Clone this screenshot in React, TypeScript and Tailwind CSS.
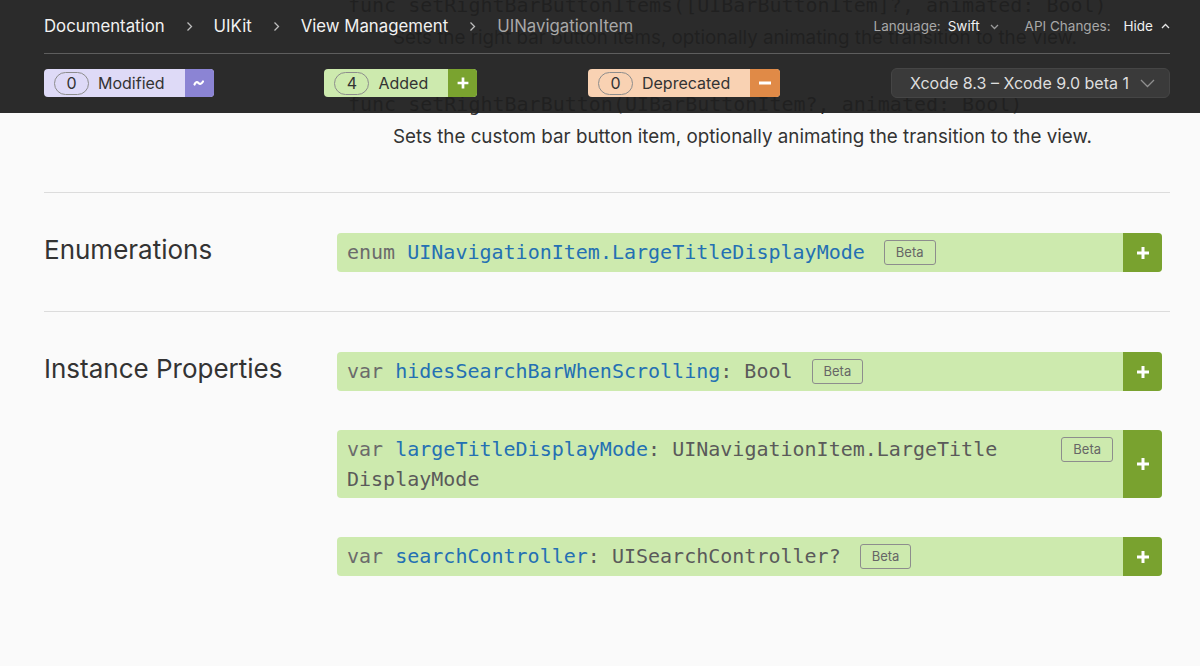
import React from 'react';

const mono = "font-['DejaVu_Sans_Mono',monospace]";

const Kw = ({ children }: { children: React.ReactNode }) => <span className="text-[#6b6b6b]">{children}</span>;
const Id = ({ children }: { children: React.ReactNode }) => <span className="text-[#2470b3]">{children}</span>;
const Ty = ({ children }: { children: React.ReactNode }) => <span className="text-[#5a5a5a]">{children}</span>;

const Plus = ({ className = '' }: { className?: string }) => (
    <svg width="14" height="14" viewBox="0 0 14 14" className={className}>
        <path d="M7 1v12M1 7h12" stroke="white" strokeWidth="3" />
    </svg>
);

const Minus = () => (
    <svg width="14" height="14" viewBox="0 0 14 14">
        <path d="M1 7h12" stroke="white" strokeWidth="3" />
    </svg>
);

const Tilde = () => (
    <svg width="12" height="8" viewBox="0 0 12 8">
        <path d="M1.5 5.5c1-2.5 2.5-3 4-1.5s3 1 4.5-1.5" fill="none" stroke="white" strokeWidth="2.2" strokeLinecap="round" />
    </svg>
);

const Crumb = () => (
    <svg width="7" height="11" viewBox="0 0 7 11">
        <path d="M1.5 1.5l4 4-4 4" fill="none" stroke="#bdbdbd" strokeWidth="1.3" />
    </svg>
);

const SmallChevron = ({ up = false }: { up?: boolean }) => (
    <svg width="9" height="6" viewBox="0 0 9 6">
        <path d={up ? 'M1 5l3.5-3.5L8 5' : 'M1 1l3.5 3.5L8 1'} fill="none" stroke={up ? '#e6e6e6' : '#9a9a9a'} strokeWidth="1.3" />
    </svg>
);

interface ChangeBadgeProps {
    count: number;
    label: string;
    bg: string;
    icon: React.ReactNode;
}

const ChangeBadge = ({ count, label, bg, icon }: ChangeBadgeProps) => (
    <div className={`flex h-[28px] rounded-[4px] overflow-hidden ${bg}`}>
        <div className="flex items-center pl-[10px] pr-[20px] gap-[9px]">
            <span className="flex h-[23px] w-[35px] items-center justify-center rounded-full border border-[#8c8c8c] text-[16px] text-[#333]">
                {count}
            </span>
            <span className="text-[16px] text-[#333]">{label}</span>
        </div>
        {icon}
    </div>
);

const BetaTag = () => (
    <span className="ml-[19px] mt-[3px] shrink-0 h-[25px] px-[11px] rounded-[3px] border border-[#8d8d8d] text-[13px] leading-[23px] text-[#666] font-['Inter',sans-serif]">
        Beta
    </span>
);

const ApiRow = ({ children }: { children: React.ReactNode }) => (
    <div className="flex min-h-[39px] rounded-[4px] overflow-hidden bg-[#cdeaae]">
        <div className="flex flex-1 min-w-0 items-start py-[4px] pl-[10px] pr-[10px]">
            <div className={`min-w-0 text-[20px] leading-[30px] ${mono}`}>{children}</div>
            <BetaTag />
        </div>
        <div className="flex w-[39px] shrink-0 items-center justify-center bg-[#79a22f]">
            <Plus />
        </div>
    </div>
);

const Header = () => (
    <div className="absolute inset-x-0 top-0 z-10 h-[113px] bg-[rgba(32,32,32,0.95)] pl-[44px] pr-[30px]">
        <div className="flex h-[54px] items-center justify-between border-b border-[#5e5e5e]">
            <div className="flex items-center gap-[21px] text-[16.8px] text-[#f2f2f2]">
                <span>Documentation</span>
                <Crumb />
                <span>UIKit</span>
                <Crumb />
                <span>View Management</span>
                <Crumb />
                <span className="text-[#a8a8a8]">UINavigationItem</span>
            </div>
            <div className="flex items-center text-[13.5px]">
                <span className="text-[#a8a8a8]">Language:</span>
                <span className="ml-[7px] text-[#f0f0f0]">Swift</span>
                <span className="ml-[10px]"><SmallChevron /></span>
                <span className="ml-[26px] text-[#a8a8a8]">API Changes:</span>
                <span className="ml-[13px] text-[#f0f0f0]">Hide</span>
                <span className="ml-[8px] mb-[2px]"><SmallChevron up /></span>
            </div>
        </div>
        <div className="flex items-center justify-between pt-[14px]">
            <ChangeBadge
                count={0}
                label="Modified"
                bg="bg-[#dedaf7]"
                icon={<span className="flex w-[29px] items-center justify-center bg-[#8b84d4]"><Tilde /></span>}
            />
            <ChangeBadge
                count={4}
                label="Added"
                bg="bg-[#cdeaae]"
                icon={<span className="flex w-[29px] items-center justify-center bg-[#7aa32f]"><Plus className="scale-90" /></span>}
            />
            <ChangeBadge
                count={0}
                label="Deprecated"
                bg="bg-[#f9d2b3]"
                icon={<span className="flex w-[30px] items-center justify-center bg-[#e08a47]"><Minus /></span>}
            />
            <div className="flex h-[30px] w-[279px] items-center justify-between rounded-[6px] border border-[#454545] bg-[#3a3a3a] pl-[18px] pr-[14px]">
                <span className="text-[16px] text-[#dedede]">Xcode 8.3 – Xcode 9.0 beta 1</span>
                <svg width="15" height="9" viewBox="0 0 15 9">
                    <path d="M1 1l6.5 6.5L14 1" fill="none" stroke="#8f8f8f" strokeWidth="1.3" />
                </svg>
            </div>
        </div>
    </div>
);

const MethodItem = ({ code, desc }: { code: React.ReactNode; desc: string }) => (
    <div>
        <div className={`pl-[11px] text-[20px] leading-[30px] text-[#333] ${mono}`}>{code}</div>
        <p className="mt-[3px] pl-[56px] text-[18.8px] leading-[30px] text-[#333]">{desc}</p>
    </div>
);

export default function App() {
    return (
        <div className="relative h-[666px] overflow-hidden bg-[#fafafa] font-['Inter',sans-serif]">
            <Header />
            <div className="ml-[44px] mr-[30px] -mt-[10px]">
                <section className="grid grid-cols-[293px_1fr] pb-[40px] border-b border-[#dcdcdc]">
                    <div />
                    <div className="flex flex-col gap-[36px] pr-[8px]">
                        <MethodItem
                            code="func setRightBarButtonItems([UIBarButtonItem]?, animated: Bool)"
                            desc="Sets the right bar button items, optionally animating the transition to the view."
                        />
                        <MethodItem
                            code="func setRightBarButton(UIBarButtonItem?, animated: Bool)"
                            desc="Sets the custom bar button item, optionally animating the transition to the view."
                        />
                    </div>
                </section>

                <section className="grid grid-cols-[293px_1fr] pt-[40px] pb-[39px] border-b border-[#dcdcdc]">
                    <h2 className="text-[26px] leading-[33px] text-[#333]">Enumerations</h2>
                    <div className="flex flex-col gap-[40px] pr-[8px]">
                        <ApiRow>
                            <Kw>enum</Kw> <Id>UINavigationItem.<wbr />LargeTitle<wbr />DisplayMode</Id>
                        </ApiRow>
                    </div>
                </section>

                <section className="grid grid-cols-[293px_1fr] pt-[40px] pb-[39px]">
                    <h2 className="text-[26px] leading-[33px] text-[#333]">Instance Properties</h2>
                    <div className="flex flex-col gap-[39px] pr-[8px]">
                        <ApiRow>
                            <Kw>var</Kw> <Id>hidesSearchBarWhenScrolling</Id><Ty>: Bool</Ty>
                        </ApiRow>
                        <ApiRow>
                            <Kw>var</Kw> <Id>largeTitleDisplayMode</Id>
                            <Ty>: UINavigationItem.<wbr />LargeTitle<wbr />DisplayMode</Ty>
                        </ApiRow>
                        <ApiRow>
                            <Kw>var</Kw> <Id>searchController</Id><Ty>: UISearchController?</Ty>
                        </ApiRow>
                    </div>
                </section>
            </div>
        </div>
    );
}
